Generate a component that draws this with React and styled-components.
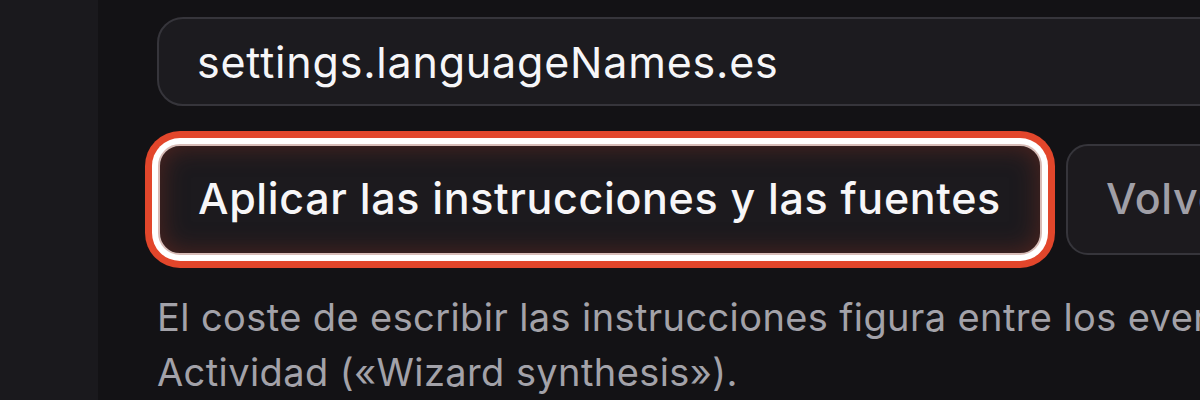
import React from "react";
import styled, { createGlobalStyle } from "styled-components";

const Global = createGlobalStyle`
  html, body { margin: 0; padding: 0; background: #131215; overflow: hidden; }
  body { font-family: Inter, "Noto Sans", sans-serif; -webkit-font-smoothing: antialiased; }
`;

const Page = styled.div`
  display: flex;
  width: 1700px;
  height: 400px;
  background: #131215;
`;

const Sidebar = styled.aside`
  width: 98px;
  flex: none;
  background: #1a191d;
`;

const Main = styled.main`
  flex: 1;
  padding: 17px 0 0 59px;
  display: flex;
  flex-direction: column;
`;

const Field = styled.div`
  box-sizing: border-box;
  height: 91px;
  width: 1400px;
  border: 2px solid #36353b;
  border-radius: 26px;
  background: #1c1b1f;
  display: flex;
  align-items: center;
  padding-left: 38px;
  font-size: 43px;
  color: #f6f6f8;
  letter-spacing: 0.8px;
`;

const Actions = styled.div`
  display: flex;
  gap: 24px;
  margin-top: 38px;
  align-items: center;
`;

const Button = styled.button`
  box-sizing: border-box;
  height: 111px;
  padding: 0 39px 4px 38px;
  border-radius: 22px;
  font-family: inherit;
  font-size: 43px;
  font-weight: 500;
  letter-spacing: 0.65px;
  cursor: pointer;
  background: #1c1a1e;
  color: ${(p) => (p.$primary ? "#f7f6f8" : "#a09fa7")};
  border: 2px solid ${(p) => (p.$primary ? "#d8bcb7" : "#36353b")};
  box-shadow: ${(p) =>
    p.$primary
      ? "inset 0 0 26px rgba(125, 45, 32, 0.55), 0 0 0 6px #ffffff, 0 0 0 13px #e2462b"
      : "none"};
  margin-left: ${(p) => (p.$primary ? "1px" : "0")};
  white-space: nowrap;
`;

const Hint = styled.p`
  margin: 35px 0 0 0;
  font-size: 38px;
  line-height: 55px;
  letter-spacing: 0.4px;
  color: #a3a2a9;
  white-space: nowrap;
`;

export default function App() {
  return (
    <>
      <Global />
      <Page>
        <Sidebar />
        <Main>
          <Field>settings.languageNames.es</Field>
          <Actions>
            <Button $primary>Aplicar las instrucciones y las fuentes</Button>
            <Button>Volver a generar</Button>
          </Actions>
          <Hint>
            El coste de escribir las instrucciones figura entre los eventos de la pestaña
            <br />
            Actividad («Wizard synthesis»).
          </Hint>
        </Main>
      </Page>
    </>
  );
}
